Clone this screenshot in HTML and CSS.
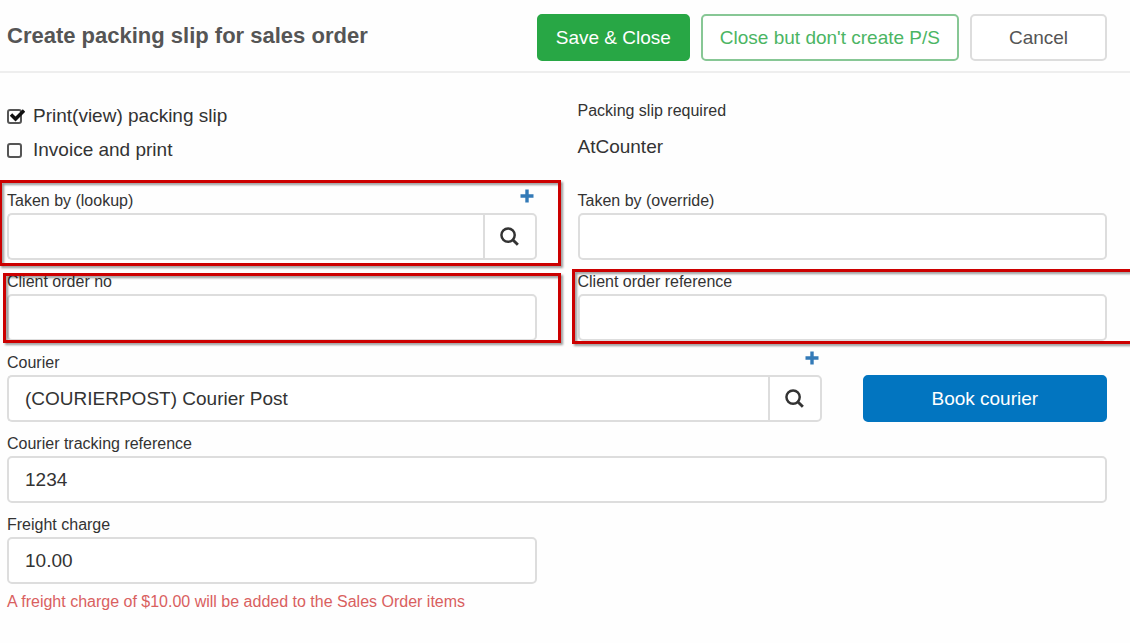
FILE: index.html
```html
<!DOCTYPE html>
<html lang="en">
<head>
  <meta charset="UTF-8" />
  <meta name="viewport" content="width=device-width, initial-scale=1.0"/>
  <title>Create packing slip for sales order</title>
  <link rel="stylesheet" href="styles.css">
</head>
<body>

  <header class="top-bar">
    <h1>Create packing slip for sales order</h1>
    <div class="actions">
      <button type="submit" form="slip-form" class="btn btn-save">Save &amp; Close</button>
      <button type="button" class="btn btn-outline">Close but don't create P/S</button>
      <button type="button" class="btn btn-cancel">Cancel</button>
    </div>
  </header>

  <form class="slip-form" id="slip-form">

    <div class="row options">
      <div class="checks">
        <label class="check">
          <input type="checkbox" checked />
          <svg class="tick" viewBox="0 0 18 16" aria-hidden="true"><path d="M4 6.5l4.5 4.5L17 2.5" fill="none" stroke="#111" stroke-width="3.4"/></svg>
          Print(view) packing slip
        </label>
        <label class="check">
          <input type="checkbox" />
          <svg class="tick" viewBox="0 0 18 16" aria-hidden="true"><path d="M4 6.5l4.5 4.5L17 2.5" fill="none" stroke="#111" stroke-width="3.4"/></svg>
          Invoice and print
        </label>
      </div>
      <div class="required">
        <div class="required-label">Packing slip required</div>
        <div class="required-value">AtCounter</div>
      </div>
    </div>

    <div class="row">
      <div class="field">
        <div class="field-head">
          <label for="taken-lookup">Taken by (lookup)</label>
          <button type="button" class="add" aria-label="Add person">
            <svg viewBox="0 0 14 14"><path d="M7 0.5v13M0.5 7h13" stroke="#337ab7" stroke-width="3.4"/></svg>
          </button>
        </div>
        <div class="lookup">
          <input type="text" id="taken-lookup" />
          <button type="button" class="search" aria-label="Search people">
            <svg viewBox="0 0 20 20"><circle cx="8.5" cy="8.5" r="7" fill="none" stroke="#333" stroke-width="2.6"/><path d="M13.4 13.4l5.4 5.4" stroke="#333" stroke-width="3"/></svg>
          </button>
        </div>
        <div class="highlight highlight-lookup"></div>
      </div>
      <div class="field">
        <div class="field-head">
          <label for="taken-override">Taken by (override)</label>
        </div>
        <input type="text" id="taken-override" />
      </div>
    </div>

    <div class="row">
      <div class="field">
        <div class="field-head">
          <label for="order-no">Client order no</label>
        </div>
        <input type="text" id="order-no" />
        <div class="highlight highlight-order"></div>
      </div>
      <div class="field">
        <div class="field-head">
          <label for="order-ref">Client order reference</label>
        </div>
        <input type="text" id="order-ref" />
        <div class="highlight highlight-ref"></div>
      </div>
    </div>

    <div class="row courier-row">
      <div class="field">
        <div class="field-head">
          <label for="courier">Courier</label>
          <button type="button" class="add" aria-label="Add courier">
            <svg viewBox="0 0 14 14"><path d="M7 0.5v13M0.5 7h13" stroke="#337ab7" stroke-width="3.4"/></svg>
          </button>
        </div>
        <div class="lookup">
          <input type="text" id="courier" value="(COURIERPOST) Courier Post" />
          <button type="button" class="search" aria-label="Search couriers">
            <svg viewBox="0 0 20 20"><circle cx="8.5" cy="8.5" r="7" fill="none" stroke="#333" stroke-width="2.6"/><path d="M13.4 13.4l5.4 5.4" stroke="#333" stroke-width="3"/></svg>
          </button>
        </div>
      </div>
      <button type="button" class="btn btn-book">Book courier</button>
    </div>

    <div class="field">
      <div class="field-head">
        <label for="tracking">Courier tracking reference</label>
      </div>
      <input type="text" id="tracking" value="1234" />
    </div>

    <div class="row">
      <div class="field">
        <div class="field-head">
          <label for="freight">Freight charge</label>
        </div>
        <input type="text" id="freight" value="10.00" />
        <p class="note">A freight charge of $10.00 will be added to the Sales Order items</p>
      </div>
    </div>

  </form>

</body>
</html>
```
FILE: styles.css
```css
* {
  box-sizing: border-box;
}

body {
  margin: 0;
  font-family: "Liberation Sans", Arial, sans-serif;
  font-size: 19px;
  color: #333;
  background-color: #fefefe;
  overflow-x: hidden;
}

.top-bar {
  display: flex;
  justify-content: space-between;
  align-items: center;
  padding: 14px 23px 10px 7px;
  border-bottom: 2px solid #eee;
}

h1 {
  margin: 0;
  font-size: 22px;
  line-height: 28px;
  padding-bottom: 4px;
  color: #555;
}

.actions {
  display: flex;
  gap: 11px;
}

.btn {
  height: 47px;
  padding: 0 17px;
  font-family: inherit;
  font-size: 19px;
  border: 2px solid transparent;
  border-radius: 5px;
  cursor: pointer;
}

.btn-save {
  background-color: #28a745;
  border-color: #28a745;
  color: white;
}

.btn-outline {
  background-color: white;
  border-color: #87c795;
  color: #4bb563;
}

.btn-cancel {
  min-width: 137px;
  background-color: white;
  border-color: #ddd;
  color: #555;
}

.btn-book {
  background-color: #0275c0;
  border-color: #0275c0;
  color: white;
}

.slip-form {
  display: flex;
  flex-direction: column;
  gap: 12px;
  padding: 26px 23px 24px 7px;
}

.row {
  display: grid;
  grid-template-columns: 1fr 1fr;
  column-gap: 41px;
}

.courier-row {
  grid-template-columns: 10fr 3fr;
  align-items: end;
}

.options {
  min-height: 80px;
}

.check {
  display: flex;
  align-items: center;
  position: relative;
  height: 34px;
}

.check input {
  appearance: none;
  width: 15px;
  height: 15px;
  margin: 0 11px 0 0;
  border: 2px solid #555;
  border-radius: 3px;
}

.tick {
  display: none;
  position: absolute;
  left: 0;
  top: 9px;
  width: 18px;
  height: 16px;
}

.check input:checked + .tick {
  display: block;
}

.required-label {
  font-size: 16px;
  line-height: 24px;
}

.required-value {
  padding-top: 12px;
  line-height: 24px;
}

.field {
  position: relative;
}

.field-head {
  display: flex;
  justify-content: space-between;
  height: 22px;
  padding-right: 3px;
  font-size: 16px;
  line-height: 20px;
}

.add {
  width: 14px;
  height: 14px;
  margin-top: -2px;
  padding: 0;
  border: none;
  background: none;
  cursor: pointer;
}

.add svg {
  display: block;
  width: 14px;
  height: 14px;
}

input[type="text"] {
  display: block;
  width: 100%;
  height: 47px;
  padding: 0 16px;
  font-family: inherit;
  font-size: 19px;
  color: #333;
  background-color: white;
  border: 2px solid #ddd;
  border-radius: 5px;
}

.lookup {
  display: flex;
}

.lookup input[type="text"] {
  flex: 1;
  min-width: 0;
  border-right: none;
  border-radius: 5px 0 0 5px;
}

.search {
  display: flex;
  align-items: center;
  justify-content: center;
  width: 54px;
  height: 47px;
  padding: 0;
  background-color: white;
  border: 2px solid #ddd;
  border-radius: 0 5px 5px 0;
  cursor: pointer;
}

.search svg {
  width: 19px;
  height: 19px;
}

.note {
  margin: 8px 0 0;
  font-size: 16px;
  line-height: 20px;
  color: #d9605e;
}

/* red call-out frames drawn over the fields */
.highlight {
  position: absolute;
  border: 3px solid #c00;
  filter: drop-shadow(2px 2px 1px rgba(0, 0, 0, 0.4));
  pointer-events: none;
}

.highlight-lookup {
  inset: -11px -24px -6px -8px;
}

.highlight-order {
  inset: 1px -24px -2px -4px;
}

.highlight-ref {
  inset: -3px -30px -3px -6px;
}
```
